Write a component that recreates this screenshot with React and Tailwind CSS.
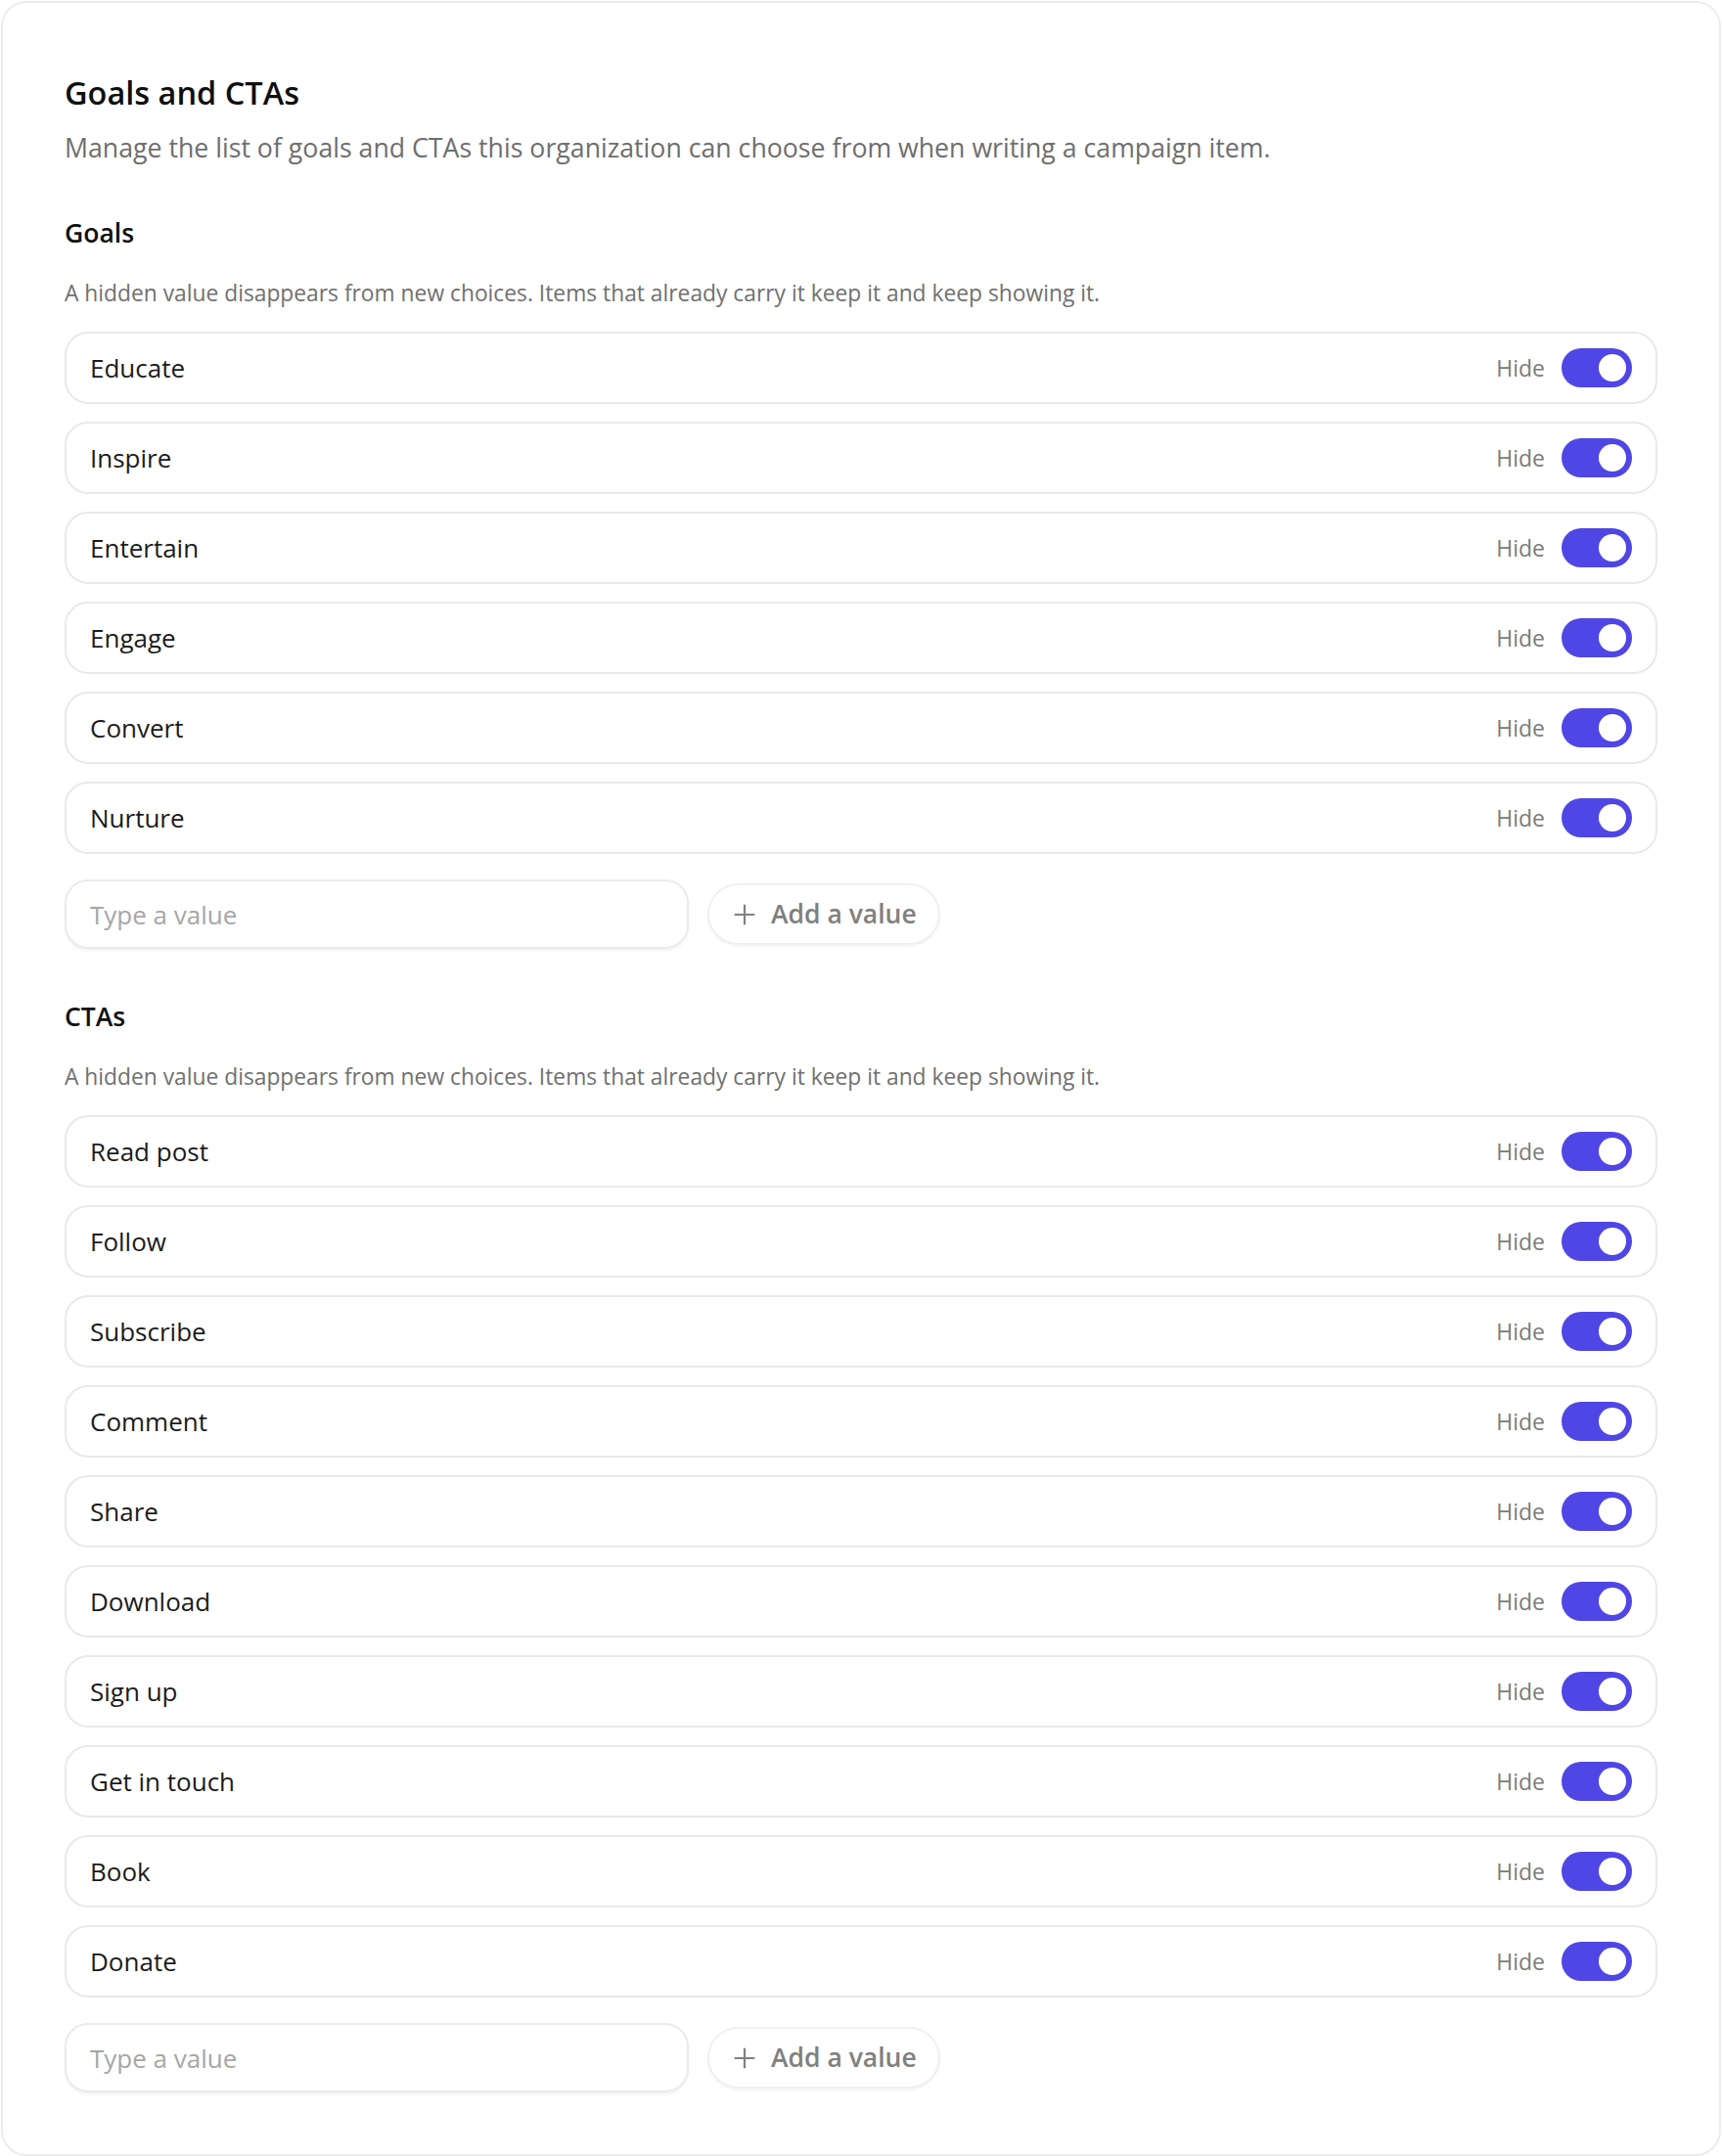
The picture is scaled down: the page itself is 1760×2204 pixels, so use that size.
import React, { useState } from "react";

const GOALS = ["Educate", "Inspire", "Entertain", "Engage", "Convert", "Nurture"];
const CTAS = [
  "Read post",
  "Follow",
  "Subscribe",
  "Comment",
  "Share",
  "Download",
  "Sign up",
  "Get in touch",
  "Book",
  "Donate",
];

function Toggle({ on, onClick }) {
  return (
    <button
      onClick={onClick}
      className={`flex h-[40px] w-[72px] items-center rounded-full p-[6px] ${
        on ? "justify-end bg-[#4f46e5]" : "justify-start bg-[#d4d4d8]"
      }`}
    >
      <span className="h-[28px] w-[28px] rounded-full bg-white" />
    </button>
  );
}

function ValueRow({ label }) {
  const [on, setOn] = useState(true);
  return (
    <div className="flex h-[74px] items-center justify-between rounded-[24px] border-2 border-[#e9e9e9] bg-white pl-[24px] pr-[24px]">
      <span className="text-[26px] text-[#1b1b1b]">{label}</span>
      <div className="flex items-center gap-[17px]">
        <span className="text-[23px] text-[#7b7b7b]">Hide</span>
        <Toggle on={on} onClick={() => setOn(!on)} />
      </div>
    </div>
  );
}

function Section({ title, items }) {
  const [value, setValue] = useState("");
  return (
    <section>
      <h2 className="h-[36px] text-[26.5px] leading-[36px] font-semibold text-[#111]">{title}</h2>
      <p className="mt-[28px] h-[32px] text-[22.8px] leading-[32px] text-[#707070]">
        A hidden value disappears from new choices. Items that already carry it keep it and keep showing it.
      </p>
      <div className="mt-[23px] flex flex-col gap-[18px]">
        {items.map((item) => (
          <ValueRow key={item} label={item} />
        ))}
      </div>
      <div className="mt-[26px] flex items-center gap-[19px]">
        <input
          value={value}
          onChange={(e) => setValue(e.target.value)}
          placeholder="Type a value"
          className="h-[71px] w-[638px] rounded-[24px] border-2 border-[#ebebeb] bg-white px-[24px] text-[26px] text-[#1b1b1b] shadow-[0_2px_3px_rgba(0,0,0,0.05)] outline-none placeholder:text-[#a6a6a6]"
        />
        <button className="flex h-[63px] items-center gap-[16px] rounded-full border-2 border-[#f0f0f0] bg-white pl-[25px] pr-[22px] text-[26.5px] font-semibold text-[#808080] shadow-[0_2px_3px_rgba(0,0,0,0.04)]">
          <svg width="22" height="22" viewBox="0 0 22 22" fill="none" stroke="#808080" strokeWidth="2.2" strokeLinecap="round">
            <path d="M11 1.5v19M1.5 11h19" />
          </svg>
          Add a value
        </button>
      </div>
    </section>
  );
}

export default function App() {
  return (
    <div className="min-h-screen bg-white px-[1px] pt-[1px] pb-[2px]" style={{ fontFamily: '"Open Sans", "Noto Sans", sans-serif' }}>
      <div className="rounded-[26px] border-2 border-[#ececec] bg-white px-[63px] pt-[70px] pb-[63px]">
        <h1 className="h-[44px] text-[32.5px] leading-[44px] font-semibold text-[#0f0f0f]">Goals and CTAs</h1>
        <p className="mt-[16px] h-[36px] text-[26.7px] leading-[36px] text-[#6e6e6e]">
          Manage the list of goals and CTAs this organization can choose from when writing a campaign item.
        </p>
        <div className="mt-[51px]">
          <Section title="Goals" items={GOALS} />
        </div>
        <div className="mt-[51px]">
          <Section title="CTAs" items={CTAS} />
        </div>
      </div>
    </div>
  );
}
